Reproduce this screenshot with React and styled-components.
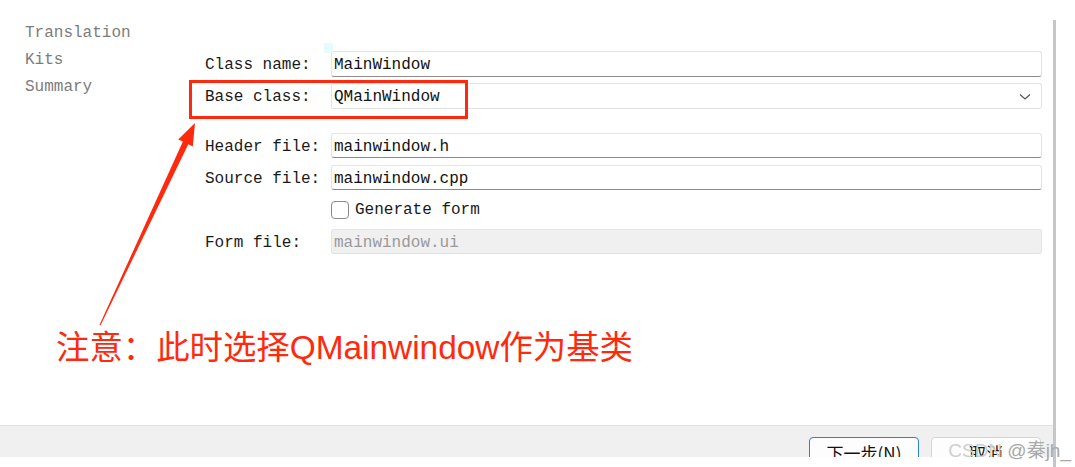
import React from 'react';
import styled, { createGlobalStyle } from 'styled-components';

const GlobalStyle = createGlobalStyle`
  html, body {
    margin: 0;
    padding: 0;
    background: #fff;
  }
  body {
    font-family: 'Liberation Mono', 'Noto Sans CJK SC', monospace;
    color: #1a1a1a;
  }
`;

const Page = styled.div`
  display: flex;
  width: 1075px;
  height: 467px;
  overflow: hidden;
  position: relative;
`;

const Window = styled.div`
  display: flex;
  flex-direction: column;
  width: 1053px;
  position: relative;
`;

const Divider = styled.div`
  width: 3px;
  margin-top: 20px;
  background: #c6c6c6;
`;

const Content = styled.div`
  display: flex;
  height: 425px;
`;

const Sidebar = styled.ul`
  list-style: none;
  margin: 0;
  width: 180px;
  padding: 20px 0 0 25px;
  box-sizing: content-box;
`;

const SideItem = styled.li`
  font-size: 16px;
  line-height: 27px;
  color: #7c7c7c;
`;

const Form = styled.div`
  flex: 1;
  display: grid;
  grid-template-columns: 126px 1fr;
  grid-template-rows: 26px 26px 12px 26px 26px 26px 26px;
  row-gap: 6px;
  align-content: start;
  padding: 51px 11px 0 0;
`;

const Label = styled.div`
  display: flex;
  align-items: center;
  box-sizing: border-box;
  height: ${p => (p.$tall ? 26 : 25)}px;
  padding-top: 2px;
  font-size: 16px;
  color: #1a1a1a;
`;

const Spacer = styled.div`
  grid-column: 1 / -1;
`;

const Field = styled.div`
  display: flex;
  align-items: center;
  box-sizing: border-box;
  height: ${p => (p.$tall ? 26 : 25)}px;
  padding: 2px 2px 0;
  border: 1px solid #e4e4e4;
  border-bottom-color: ${p => (p.$line ? '#8c8c8c' : '#e0e0e0')};
  border-radius: 3px;
  background: ${p => (p.$disabled ? '#f0f0f0' : '#fff')};
  color: ${p => (p.$disabled ? '#9a9a9a' : '#111')};
  font-size: 16px;
  justify-content: space-between;
`;

const Chevron = styled.svg`
  width: 12px;
  height: 8px;
  margin-right: 8px;
`;

const CheckRow = styled.div`
  grid-column: 2;
  display: flex;
  align-items: center;
  gap: 6px;
  font-size: 16px;
`;

const Box = styled.span`
  width: 18px;
  height: 18px;
  box-sizing: border-box;
  border: 1px solid #8a8a8a;
  border-radius: 4px;
  background: #fff;
`;

const Footer = styled.div`
  height: 32px;
  box-sizing: border-box;
  border-top: 1px solid #e2e2e2;
  background: #f0f0f0;
  display: flex;
  justify-content: flex-end;
  gap: 12px;
  padding: 11px 12px 0 0;
  overflow: hidden;
`;

const Button = styled.div`
  width: 110px;
  height: 30px;
  box-sizing: border-box;
  border: 1px solid ${p => (p.$primary ? '#2f7fd6' : '#d4d4d4')};
  border-radius: 4px;
  background: #fdfdfd;
  display: flex;
  justify-content: center;
  align-items: center;
  font-family: 'Noto Sans CJK SC', sans-serif;
  font-size: 17px;
  color: #111;
  flex-shrink: 0;
`;

const Watermark = styled.div`
  position: absolute;
  right: 4px;
  bottom: 5px;
  font-family: 'Liberation Sans', 'Noto Sans CJK SC', sans-serif;
  font-size: 19px;
  color: #a8a8a8;
  white-space: nowrap;
  span {
    color: #cfcfcf;
  }
`;

const RedBox = styled.div`
  position: absolute;
  left: 189px;
  top: 80px;
  width: 279px;
  height: 39px;
  box-sizing: border-box;
  border: 3px solid #ff2a0e;
`;

const ArrowLayer = styled.svg`
  position: absolute;
  left: 0;
  top: 0;
  pointer-events: none;
`;

const Note = styled.div`
  position: absolute;
  left: 56px;
  top: 331px;
  font-family: 'Liberation Sans', 'Noto Sans CJK SC', sans-serif;
  font-size: 33.4px;
  line-height: 33px;
  color: #ff2a0e;
  white-space: nowrap;
`;

const Ghost = styled.div`
  position: absolute;
  left: 324px;
  top: 43px;
  width: 9px;
  height: 10px;
  background: #e6fcfc;
`;

const App = () => {
  return (
    <Page>
      <GlobalStyle />
      <Window>
        <Content>
          <Sidebar>
            <SideItem>Translation</SideItem>
            <SideItem>Kits</SideItem>
            <SideItem>Summary</SideItem>
          </Sidebar>
          <Form>
            <Label $tall>Class name:</Label>
            <Field $tall $line>MainWindow</Field>
            <Label $tall>Base class:</Label>
            <Field $tall>
              QMainWindow
              <Chevron viewBox="0 0 12 8">
                <path d="M1 1.5 L6 6 L11 1.5" fill="none" stroke="#555" strokeWidth="1.2" />
              </Chevron>
            </Field>
            <Spacer />
            <Label>Header file:</Label>
            <Field $line>mainwindow.h</Field>
            <Label>Source file:</Label>
            <Field $line>mainwindow.cpp</Field>
            <CheckRow>
              <Box />
              Generate form
            </CheckRow>
            <Label>Form file:</Label>
            <Field $disabled>mainwindow.ui</Field>
          </Form>
        </Content>
        <Footer>
          <Button $primary>下一步(N)</Button>
          <Button>取消</Button>
        </Footer>
        <Ghost />
        <RedBox />
        <ArrowLayer width="300" height="340" viewBox="0 0 300 340">
          <polygon
            points="195,123 192.8,146.5 188.3,144.2 100.6,325.2 99.6,324.8 182.9,141.6 178.2,139.5"
            fill="#ff2a0e"
          />
        </ArrowLayer>
        <Note>注意：此时选择QMainwindow作为基类</Note>
      </Window>
      <Divider />
      <Watermark>
        <span>CSDN</span> @秦jh_
      </Watermark>
    </Page>
  );
};

export default App;
